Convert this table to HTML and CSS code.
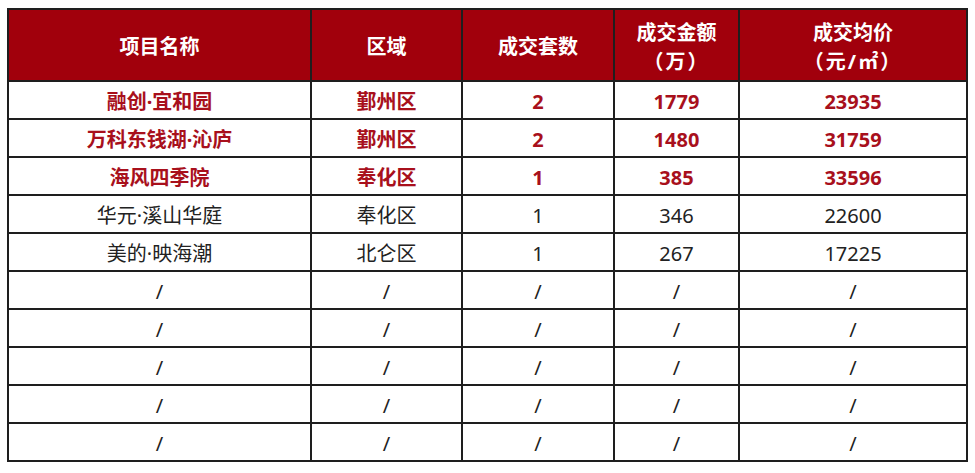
FILE: index.html
```html
<!DOCTYPE html>
<html lang="zh-CN">
<head>
<meta charset="utf-8">
<title>成交表</title>
<link rel="stylesheet" href="styles.css">
</head>
<body>
<table class="deals">
  <colgroup>
    <col class="c1"><col class="c2"><col class="c3"><col class="c4"><col class="c5">
  </colgroup>
  <thead>
    <tr class="head">
      <th>项目名称</th>
      <th>区域</th>
      <th>成交套数</th>
      <th>成交金额<br><span class="unit">（万）</span></th>
      <th>成交均价<br><span class="unit">（元/㎡）</span></th>
    </tr>
  </thead>
  <tbody>
    <tr class="hl"><td>融创·宜和园</td><td>鄞州区</td><td>2</td><td>1779</td><td>23935</td></tr>
    <tr class="hl"><td>万科东钱湖·沁庐</td><td>鄞州区</td><td>2</td><td>1480</td><td>31759</td></tr>
    <tr class="hl"><td>海风四季院</td><td>奉化区</td><td>1</td><td>385</td><td>33596</td></tr>
    <tr><td>华元·溪山华庭</td><td>奉化区</td><td>1</td><td>346</td><td>22600</td></tr>
    <tr><td>美的·映海潮</td><td>北仑区</td><td>1</td><td>267</td><td>17225</td></tr>
    <tr><td>/</td><td>/</td><td>/</td><td>/</td><td>/</td></tr>
    <tr><td>/</td><td>/</td><td>/</td><td>/</td><td>/</td></tr>
    <tr><td>/</td><td>/</td><td>/</td><td>/</td><td>/</td></tr>
    <tr><td>/</td><td>/</td><td>/</td><td>/</td><td>/</td></tr>
    <tr><td>/</td><td>/</td><td>/</td><td>/</td><td>/</td></tr>
  </tbody>
</table>
</body>
</html>
```
FILE: styles.css
```css
html, body {
  margin: 0;
  padding: 0;
  background: #ffffff;
}
body {
  padding: 8px 0 0 7px;
  font-family: "Noto Sans", "Noto Sans CJK SC", sans-serif;
}
.deals {
  border-collapse: collapse;
  table-layout: fixed;
  width: 959px;
}
.c1 { width: 303px; }
.c2 { width: 151px; }
.c3 { width: 152px; }
.c4 { width: 125px; }
.c5 { width: 228px; }
.deals th,
.deals td {
  border: 2px solid #1e1e1e;
  text-align: center;
  vertical-align: middle;
  padding: 0;
}
.deals th {
  background: #a1000c;
  color: #ffffff;
  font-size: 20px;
  font-weight: 700;
  line-height: 29px;
  height: 67px;
  padding-top: 3px;
}
.unit {
  letter-spacing: 2px;
}
.deals td {
  height: 32px;
  padding-top: 4px;
  font-size: 20px;
  line-height: 24px;
  color: #222222;
}
.deals .hl td {
  color: #a8101c;
  font-weight: 700;
}
```
